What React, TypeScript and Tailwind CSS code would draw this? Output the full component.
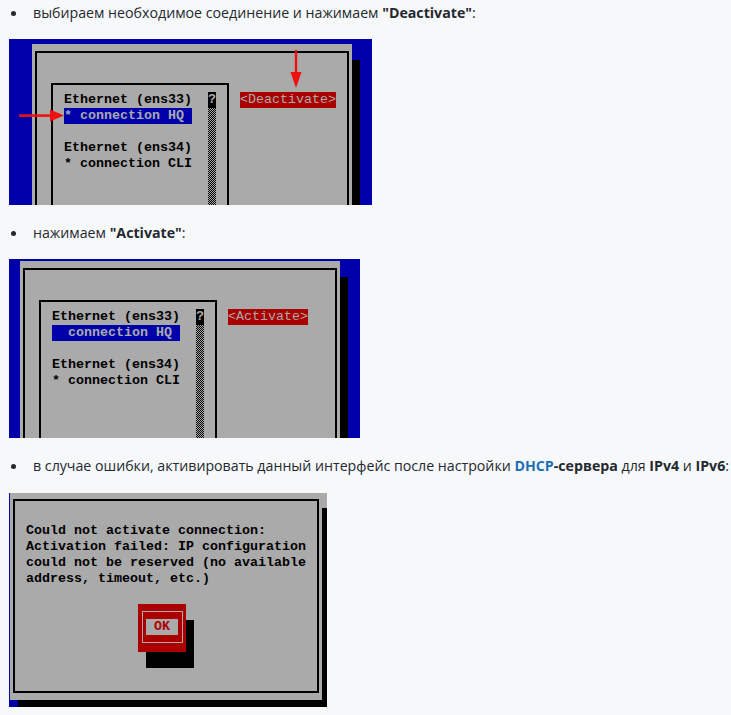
import React from "react";

const MONO = "font-['Liberation_Mono',monospace] font-bold text-[13.33px] leading-[16px] whitespace-pre";

type Row = { text: string; hl?: boolean };

function Bullet({ children }: { children: React.ReactNode }) {
  return (
    <div className="flex items-center h-[26px]">
      <span className="ml-[11px] w-[5px] h-[5px] rounded-full bg-[#24292f] shrink-0" />
      <span className="ml-[17px] text-[14.2px] text-[#24292f] font-['Open_Sans',sans-serif] whitespace-nowrap">
        {children}
      </span>
    </div>
  );
}

function ListPanel({
  outerCls,
  rows,
  button,
  children,
}: {
  outerCls: string;
  rows: Row[];
  button: string;
  children?: React.ReactNode;
}) {
  return (
    <div className={`relative ml-[9px] bg-[#0000aa] overflow-hidden ${outerCls}`}>
      <div className="w-[320px] h-[400px] bg-[#aaaaaa] shadow-[8px_16px_0_0_#000] pt-[7px] px-[3px]">
        <div className="h-[380px] border-2 border-black pl-[14px] pt-[30px] flex items-start">
          <div className="w-[178px] h-[300px] border-2 border-black pl-[11px] pt-[7px] flex">
            <div className="w-[128px] flex flex-col">
              {rows.map((r, i) => (
                <div
                  key={i}
                  className={`${MONO} h-[16px] ${r.hl ? "bg-[#0000aa] text-[#aaaaaa]" : "text-black"}`}
                >
                  {r.text}
                </div>
              ))}
            </div>
            <div className="ml-[16px] w-[8px] flex flex-col">
              <div className={`${MONO} h-[16px] bg-black text-[#aaaaaa] text-center`}>?</div>
              <div className="flex-1 bg-[image:repeating-conic-gradient(#000_0%_25%,#aaaaaa_0%_50%)] bg-[length:2px_2px]" />
            </div>
          </div>
          <div className={`${MONO} ml-[11px] mt-[9px] h-[16px] bg-[#aa0000] text-[#aaaaaa] font-normal`}>
            {button}
          </div>
        </div>
      </div>
      {children}
    </div>
  );
}

export default function App() {
  return (
    <div className="w-[731px] h-[715px] overflow-hidden bg-[#f7f8fa]">
      <Bullet>
        выбираем необходимое соединение и нажимаем <b>"Deactivate"</b>:
      </Bullet>
      <div className="mt-[13px]">
        <ListPanel
          outerCls="w-[363px] h-[166px] pl-[23px] pt-[5px]"
          rows={[
            { text: "Ethernet (ens33)" },
            { text: "* connection HQ ", hl: true },
            { text: " " },
            { text: "Ethernet (ens34)" },
            { text: "* connection CLI" },
          ]}
          button="<Deactivate>"
        >
          <svg className="absolute left-[10px] top-[70px]" width="45" height="13" viewBox="0 0 45 13">
            <rect x="0" y="5.3" width="33" height="2.6" fill="#ee1111" />
            <polygon points="31,0.5 45,6.5 31,12.5" fill="#ee1111" />
          </svg>
          <svg className="absolute left-[281px] top-[11px]" width="12" height="38" viewBox="0 0 12 38">
            <rect x="4.8" y="0" width="2.4" height="25" fill="#ee1111" />
            <polygon points="0.5,22 6,38 11.5,22" fill="#ee1111" />
          </svg>
        </ListPanel>
      </div>

      <div className="mt-[15px]">
        <Bullet>
          нажимаем <b>"Activate"</b>:
        </Bullet>
      </div>
      <div className="mt-[13px]">
        <ListPanel
          outerCls="w-[351px] h-[179px] pl-[11px] pt-[2px]"
          rows={[
            { text: "Ethernet (ens33)" },
            { text: "  connection HQ ", hl: true },
            { text: " " },
            { text: "Ethernet (ens34)" },
            { text: "* connection CLI" },
          ]}
          button="<Activate>"
        />
      </div>

      <div className="mt-[15px]">
        <Bullet>
          в случае ошибки, активировать данный интерфейс после настройки{" "}
          <b className="text-[#1f6fb5]">DHCP</b>
          <b>-сервера</b> для <b>IPv4</b> и <b>IPv6</b>:
        </Bullet>
      </div>
      <div className="relative mt-[14px] ml-[9px] w-[318px] h-[214px] bg-[#aaaaaa] border-l border-[#0000aa] overflow-hidden">
        <div className="w-[312px] h-[207px] bg-[#aaaaaa] shadow-[8px_15px_0_0_#000] pt-[6px] px-[3px] pb-[7px]">
          <div className="h-full border-2 border-black pl-[11px] pt-[22px]">
            <div className={`${MONO} text-black`}>Could not activate connection:</div>
            <div className={`${MONO} text-black`}>Activation failed: IP configuration</div>
            <div className={`${MONO} text-black`}>could not be reserved (no available</div>
            <div className={`${MONO} text-black`}>address, timeout, etc.)</div>
            <div className="mt-[17px] ml-[112px] w-[48px] h-[48px] bg-[#aa0000] shadow-[8px_16px_0_0_#000] pt-[7px] pl-[4px]">
              <div className="w-[41px] h-[32px] border border-[#aaaaaa] pl-[3px] pt-[7px]">
                <div className={`${MONO} w-[32px] h-[16px] bg-[#aaaaaa] text-[#aa0000] text-center`}>OK</div>
              </div>
            </div>
          </div>
        </div>
        <div className="absolute left-0 bottom-0 w-[8px] h-[7px] bg-[#0000aa]" />
      </div>
    </div>
  );
}
